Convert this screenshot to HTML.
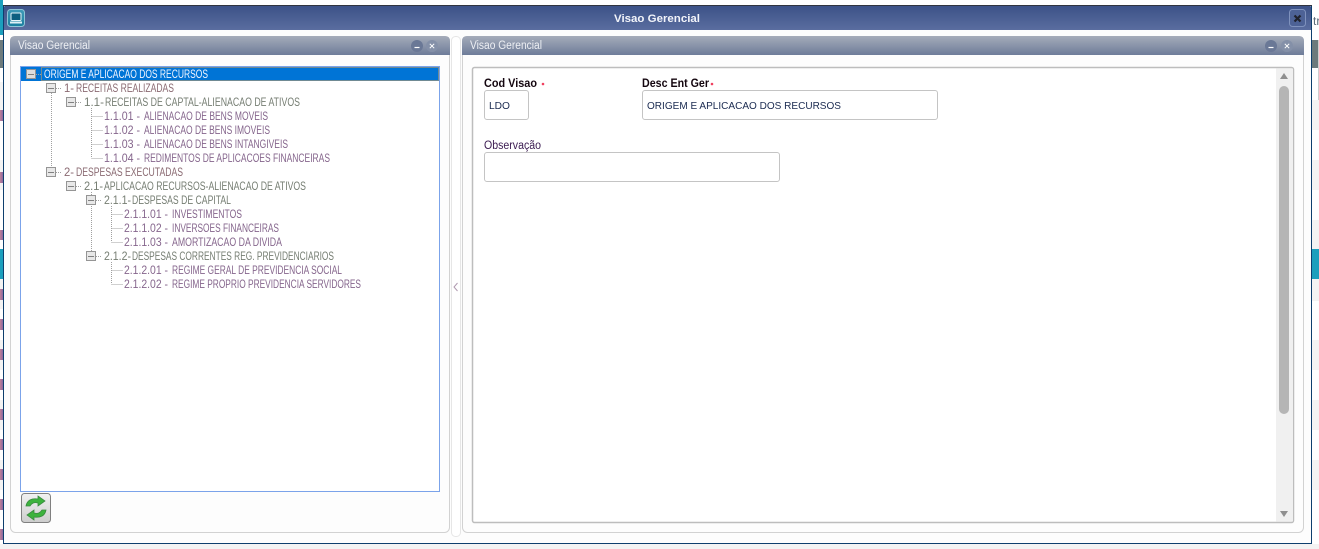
<!DOCTYPE html>
<html><head><meta charset="utf-8"><title>Visao Gerencial</title>
<style>
html,body{margin:0;padding:0;width:1319px;height:549px;overflow:hidden;background:#fff}
svg{display:block}
text{font-family:"Liberation Sans",sans-serif}
.t{font-size:11.5px}
</style></head><body>
<svg width="1319" height="549" viewBox="0 0 1319 549" xmlns="http://www.w3.org/2000/svg">
<defs>
<linearGradient id="tb" x1="0" y1="0" x2="0" y2="1"><stop offset="0" stop-color="#3c5288"/><stop offset="1" stop-color="#5a6d9f"/></linearGradient>
<linearGradient id="ph" x1="0" y1="0" x2="0" y2="1"><stop offset="0" stop-color="#a5acba"/><stop offset="1" stop-color="#6e7c99"/></linearGradient>
<linearGradient id="ic" x1="0" y1="0" x2="0" y2="1"><stop offset="0" stop-color="#3f9ab8"/><stop offset="1" stop-color="#1a7f9f"/></linearGradient>
<linearGradient id="btn" x1="0" y1="0" x2="0" y2="1"><stop offset="0" stop-color="#f2f2f2"/><stop offset="1" stop-color="#cdcdcd"/></linearGradient>
<linearGradient id="pk" x1="0" y1="0" x2="1" y2="0"><stop offset="0" stop-color="#c08098"/><stop offset="1" stop-color="#8a6aa0"/></linearGradient>
</defs>
<!-- page behind -->
<rect width="1319" height="549" fill="#fff"/>
<g fill="#f3f3f3"><rect x="0" y="82" width="3" height="36"/><rect x="0" y="160" width="3" height="30"/><rect x="0" y="279" width="3" height="30"/><rect x="0" y="340" width="3" height="30"/><rect x="0" y="400" width="3" height="30"/><rect x="0" y="460" width="3" height="30"/><rect x="0" y="544" width="1319" height="5"/>
<rect x="1312" y="100" width="7" height="30"/><rect x="1312" y="160" width="7" height="30"/><rect x="1312" y="220" width="7" height="30"/><rect x="1312" y="279" width="7" height="22"/><rect x="1312" y="340" width="7" height="30"/><rect x="1312" y="400" width="7" height="30"/><rect x="1312" y="460" width="7" height="30"/></g>
<rect x="0" y="0" width="3" height="35" fill="#1c9fbd"/>
<rect x="0" y="40" width="3" height="28" fill="#6c7a7c"/>
<rect x="0" y="249" width="3" height="30" fill="#1c9fbd"/>
<rect x="1312" y="249" width="7" height="30" fill="#1c9fbd"/>
<rect x="1312" y="40" width="6" height="28" fill="#6c7a7c"/>
<rect x="1318" y="40" width="1" height="60" fill="#cfcfcf"/>
<text x="1313" y="25" font-size="12" fill="#5a6a78">tr</text>
<g fill="url(#pk)"><rect x="0" y="110" width="3" height="11"/><rect x="0" y="172" width="3" height="11"/><rect x="0" y="230" width="3" height="10"/><rect x="0" y="289" width="3" height="11"/><rect x="0" y="319" width="3" height="11"/><rect x="0" y="349" width="3" height="11"/><rect x="0" y="379" width="3" height="11"/><rect x="0" y="409" width="3" height="11"/><rect x="0" y="439" width="3" height="11"/><rect x="0" y="469" width="3" height="11"/><rect x="0" y="499" width="3" height="11"/><rect x="0" y="529" width="3" height="11"/></g>
<!-- window -->
<rect x="3.5" y="5.5" width="1308" height="538" fill="#fdfdfd" stroke="#0e3f6e"/>
<path d="M4 30V7Q4 6 5 6H1310Q1311 6 1311 7V30Z" fill="url(#tb)"/>
<rect x="3" y="5" width="1309" height="1" fill="#30343f"/>
<rect x="7.5" y="9.5" width="17" height="17" rx="3" fill="url(#ic)" stroke="#8fc3d6"/>
<rect x="11" y="13" width="10" height="7.5" rx="1" fill="#0e5f80" stroke="#e8f5fa" stroke-width="1"/>
<rect x="10" y="21.5" width="12" height="2" fill="#dff0f6"/>
<text x="657" y="22" text-anchor="middle" font-size="11" font-weight="bold" fill="#f2f4fa" textLength="86" lengthAdjust="spacingAndGlyphs">Visao Gerencial</text>
<rect x="1289.500" y="9.500" width="16" height="17" rx="3" fill="#4d6296" stroke="#7f92bd"/>
<path d="M1294.500 15.500l6 6M1300.500 15.500l-6 6" stroke="#20222c" stroke-width="2.200"/>
<!-- left panel -->
<rect x="10.500" y="36.500" width="439" height="496" rx="5" fill="#fdfdfd" stroke="#d2d2d2"/>
<path d="M10 55V41Q10 36 15 36H445Q450 36 450 41V55Z" fill="url(#ph)"/>
<text x="18" y="49" class="t" fill="#eef0f4" textLength="72" lengthAdjust="spacingAndGlyphs">Visao Gerencial</text>
<circle cx="417" cy="46" r="6" fill="#6a7896"/><circle cx="432" cy="46" r="6" fill="#8490a8"/>
<path d="M414.500 47.500h5" stroke="#fff" stroke-width="1.200"/><path d="M429.800 43.800l4.400 4.400M434.200 43.800l-4.400 4.400" stroke="#fff"/>
<rect x="20.500" y="66.500" width="419" height="425" fill="#fff" stroke="#7ba3ea"/>
<rect x="21" y="67" width="418" height="14" fill="#0074d6"/>
<rect x="41.500" y="67.500" width="397" height="13" fill="none" stroke="#e0a050" stroke-dasharray="1 1"/>
<!-- tree lines -->
<g stroke="#a0a0a0" stroke-dasharray="1 1" fill="none">
<path d="M36 74.500h6"/>
<path d="M56 88.500h6M51.500 93v75M76 102.500h6"/>
<path d="M91.500 108v50M91.500 116.500h11M91.500 130.500h11M91.500 144.500h11M91.500 158.500h11"/>
<path d="M56 172.500h6M76 186.500h6M96 200.500h6M91.500 192v60M96 256.500h6"/>
<path d="M111.500 206v36M111.500 214.500h11M111.500 228.500h11M111.500 242.500h11M111.500 262v22M111.500 270.500h11M111.500 284.500h11"/>
</g>
<!-- expanders -->
<g fill="#e8e8e8" stroke="#959595"><rect x="26.500" y="69.500" width="9" height="9" fill="#ddd"/><rect x="46.500" y="83.500" width="9" height="9"/><rect x="66.500" y="97.500" width="9" height="9"/><rect x="46.500" y="167.500" width="9" height="9"/><rect x="66.500" y="181.500" width="9" height="9"/><rect x="86.500" y="195.500" width="9" height="9"/><rect x="86.500" y="251.500" width="9" height="9"/></g>
<g stroke="#808080"><path d="M28 74.500h6M48 88.500h6M68 102.500h6M48 172.500h6M68 186.500h6M88 200.500h6M88 256.500h6"/></g>
<!-- tree text -->
<text class="t" x="44" y="78" fill="#f2f6ff" textLength="164" lengthAdjust="spacingAndGlyphs">ORIGEM E APLICACAO DOS RECURSOS</text>
<g fill="#8a6a72">
<text class="t" x="64" y="92" textLength="10" lengthAdjust="spacingAndGlyphs">1-</text><text class="t" x="76" y="92" textLength="98" lengthAdjust="spacingAndGlyphs">RECEITAS REALIZADAS</text>
<text class="t" x="64" y="176" textLength="10" lengthAdjust="spacingAndGlyphs">2-</text><text class="t" x="76" y="176" textLength="107" lengthAdjust="spacingAndGlyphs">DESPESAS EXECUTADAS</text>
</g>
<g fill="#757d72">
<text class="t" x="84" y="106" textLength="20" lengthAdjust="spacingAndGlyphs">1.1-</text><text class="t" x="105" y="106" textLength="195" lengthAdjust="spacingAndGlyphs">RECEITAS DE CAPTAL-ALIENACAO DE ATIVOS</text>
<text class="t" x="84" y="190" textLength="19" lengthAdjust="spacingAndGlyphs">2.1-</text><text class="t" x="104" y="190" textLength="202" lengthAdjust="spacingAndGlyphs">APLICACAO RECURSOS-ALIENACAO DE ATIVOS</text>
<text class="t" x="104" y="204" textLength="27" lengthAdjust="spacingAndGlyphs">2.1.1-</text><text class="t" x="132" y="204" textLength="99" lengthAdjust="spacingAndGlyphs">DESPESAS DE CAPITAL</text>
<text class="t" x="104" y="260" textLength="27" lengthAdjust="spacingAndGlyphs">2.1.2-</text><text class="t" x="132" y="260" textLength="202" lengthAdjust="spacingAndGlyphs">DESPESAS CORRENTES REG. PREVIDENCIARIOS</text>
</g>
<g fill="#85658c">
<text class="t" x="104" y="120" textLength="36" lengthAdjust="spacingAndGlyphs">1.1.01 -</text><text class="t" x="144" y="120" textLength="124" lengthAdjust="spacingAndGlyphs">ALIENACAO DE BENS MOVEIS</text>
<text class="t" x="104" y="134" textLength="36" lengthAdjust="spacingAndGlyphs">1.1.02 -</text><text class="t" x="144" y="134" textLength="126" lengthAdjust="spacingAndGlyphs">ALIENACAO DE BENS IMOVEIS</text>
<text class="t" x="104" y="148" textLength="36" lengthAdjust="spacingAndGlyphs">1.1.03 -</text><text class="t" x="144" y="148" textLength="144" lengthAdjust="spacingAndGlyphs">ALIENACAO DE BENS INTANGIVEIS</text>
<text class="t" x="104" y="162" textLength="36" lengthAdjust="spacingAndGlyphs">1.1.04 -</text><text class="t" x="144" y="162" textLength="186" lengthAdjust="spacingAndGlyphs">REDIMENTOS DE APLICACOES FINANCEIRAS</text>
<text class="t" x="124" y="218" textLength="44" lengthAdjust="spacingAndGlyphs">2.1.1.01 -</text><text class="t" x="172" y="218" textLength="70" lengthAdjust="spacingAndGlyphs">INVESTIMENTOS</text>
<text class="t" x="124" y="232" textLength="44" lengthAdjust="spacingAndGlyphs">2.1.1.02 -</text><text class="t" x="172" y="232" textLength="107" lengthAdjust="spacingAndGlyphs">INVERSOES FINANCEIRAS</text>
<text class="t" x="124" y="246" textLength="44" lengthAdjust="spacingAndGlyphs">2.1.1.03 -</text><text class="t" x="172" y="246" textLength="110" lengthAdjust="spacingAndGlyphs">AMORTIZACAO DA DIVIDA</text>
<text class="t" x="124" y="274" textLength="44" lengthAdjust="spacingAndGlyphs">2.1.2.01 -</text><text class="t" x="172" y="274" textLength="170" lengthAdjust="spacingAndGlyphs">REGIME GERAL DE PREVIDENCIA SOCIAL</text>
<text class="t" x="124" y="288" textLength="44" lengthAdjust="spacingAndGlyphs">2.1.2.02 -</text><text class="t" x="172" y="288" textLength="189" lengthAdjust="spacingAndGlyphs">REGIME PROPRIO PREVIDENCIA SERVIDORES</text>
</g>
<!-- refresh button -->
<rect x="21.500" y="493.500" width="29" height="29" rx="3" fill="url(#btn)" stroke="#808080"/>
<path d="M26 506c1-6 6-8 12-7v-3l7 5-7 5v-3c-4-1-6 0-8 3z" fill="#3db33d" stroke="#3a8a40" stroke-width=".8"/>
<path d="M46 510c-1 6-6 8-12 7v3l-7-5 7-5v3c4 1 6 0 8-3z" fill="#3db33d" stroke="#3a8a40" stroke-width=".8"/>
<!-- splitter -->
<rect x="451.500" y="36.500" width="9" height="500" rx="4" fill="#fff" stroke="#e6e6e6"/>
<path d="M457.500 283l-3.500 4 3.500 4" fill="none" stroke="#b09ab0" stroke-width="1"/>
<!-- right panel -->
<rect x="462.500" y="36.500" width="841" height="496" rx="5" fill="#fdfdfd" stroke="#d2d2d2"/>
<path d="M462 55V41Q462 36 467 36H1299Q1304 36 1304 41V55Z" fill="url(#ph)"/>
<text x="470" y="49" class="t" fill="#eef0f4" textLength="72" lengthAdjust="spacingAndGlyphs">Visao Gerencial</text>
<circle cx="1271" cy="46" r="6" fill="#6a7896"/><circle cx="1287" cy="46" r="6" fill="#8490a8"/>
<path d="M1268.500 47.500h5" stroke="#fff" stroke-width="1.200"/><path d="M1284.800 43.800l4.400 4.400M1289.200 43.800l-4.400 4.400" stroke="#fff"/>
<rect x="472.500" y="67.500" width="821" height="455" rx="2" fill="#fff" stroke="#bdbdbd" stroke-width="1.500"/>
<rect x="1276" y="68.500" width="17" height="453" fill="#f0f0f0"/>
<path d="M1284 73l4 6h-8z" fill="#8f8f8f"/><path d="M1280 511h8l-4 6z" fill="#8f8f8f"/>
<rect x="1279" y="86" width="10" height="328" rx="5" fill="#b5b5b5"/>
<!-- form -->
<text x="484" y="87" font-size="12" font-weight="bold" fill="#14060f" textLength="53" lengthAdjust="spacingAndGlyphs">Cod Visao</text>
<circle cx="543" cy="84" r="1.300" fill="#f04060"/>
<text x="642" y="87" font-size="12" font-weight="bold" fill="#14060f" textLength="67" lengthAdjust="spacingAndGlyphs">Desc Ent Ger</text>
<circle cx="712" cy="84" r="1.300" fill="#f04060"/>
<rect x="484.500" y="90.500" width="44" height="29" rx="2.500" fill="#fff" stroke="#c4c4c4"/>
<text x="489" y="109" font-size="10.500" fill="#1a2a50" textLength="21" lengthAdjust="spacingAndGlyphs">LDO</text>
<rect x="642.500" y="90.500" width="295" height="29" rx="2.500" fill="#fff" stroke="#c4c4c4"/>
<text x="647" y="109" font-size="10.500" fill="#1a2a50" textLength="194" lengthAdjust="spacingAndGlyphs">ORIGEM E APLICACAO DOS RECURSOS</text>
<text x="484" y="149" font-size="11.500" fill="#3a1a50" textLength="57" lengthAdjust="spacingAndGlyphs">Observação</text>
<rect x="484.500" y="152.500" width="295" height="29" rx="2.500" fill="#fff" stroke="#c4c4c4"/>
</svg>
</body></html>
